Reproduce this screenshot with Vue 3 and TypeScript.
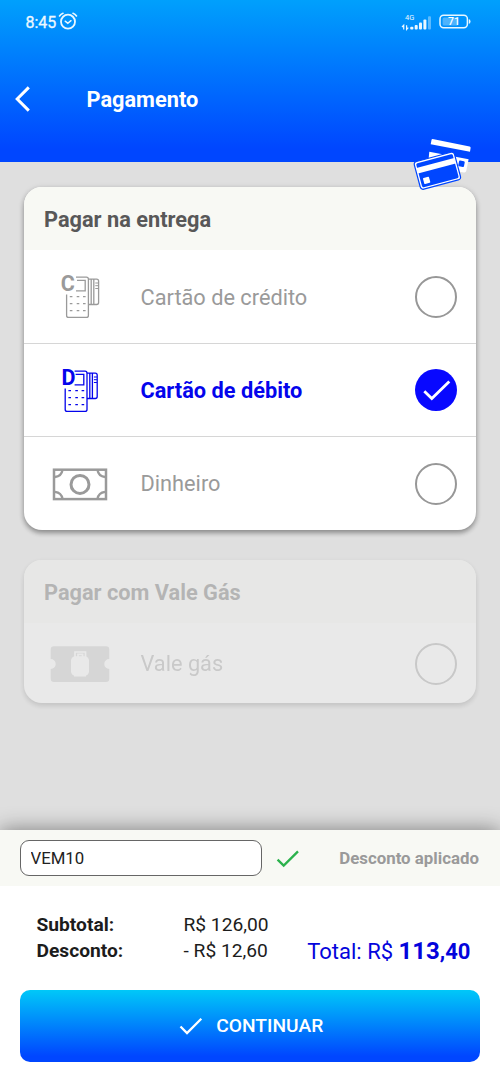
<script setup lang="ts">
import { ref } from 'vue'

interface Method {
  id: string
  label: string
  icon: 'terminal' | 'cash'
  letter?: string
}

const methods: Method[] = [
  { id: 'credit', label: 'Cartão de crédito', icon: 'terminal', letter: 'C' },
  { id: 'debit', label: 'Cartão de débito', icon: 'terminal', letter: 'D' },
  { id: 'cash', label: 'Dinheiro', icon: 'cash' },
]

const selected = ref('debit')
const coupon = ref('VEM10')
const keypad = [36.6, 43.6, 50.7]
</script>

<template>
  <div class="screen">
    <header class="top">
      <div class="status">
        <span class="clock">8:45</span>
        <svg class="alarm" width="20" height="20" viewBox="0 0 20 20" fill="none" stroke="#e9f7ff" stroke-linecap="round">
          <circle cx="10" cy="10.7" r="7" stroke-width="1.8" />
          <path d="M7.2 10.2l2.6 2.1 3.2-2.6" stroke-width="1.5" />
          <path d="M1.5 5Q2.8 3 5 2.3M15 2.3Q17.2 3 18.5 5" stroke-width="1.6" />
        </svg>
        <svg class="signal" width="34" height="20" viewBox="0 0 34 20">
          <text x="4" y="7.8" class="net">4G</text>
          <path d="M2.7 17.5v-4.2L1 15M5.6 13.2v4.2L7.3 15.6" fill="none" stroke="#e9f7ff" stroke-width="1.2" />
          <g fill="#e9f7ff">
            <rect x="9.2" y="14.8" width="3.2" height="2.7" rx="1" />
            <rect x="13.7" y="13" width="3" height="4.5" rx="1" />
            <rect x="18" y="10.6" width="3" height="6.9" rx="1" />
            <rect x="22.4" y="7.6" width="3" height="9.9" rx="1" />
            <rect x="27" y="4.3" width="3" height="13.2" rx="1" opacity=".4" />
          </g>
        </svg>
        <svg class="battery" width="33" height="16" viewBox="0 0 33 16">
          <rect x="1" y="1.3" width="27.4" height="12.4" rx="3.6" fill="none" stroke="#e9f7ff" stroke-width="1.5" />
          <rect x="3.6" y="3.6" width="15.5" height="8" rx="1.5" fill="#fff" opacity=".3" />
          <path d="M29.8 5.2q1.7 0 1.7 2.3t-1.7 2.3z" fill="#e9f7ff" />
          <text x="9" y="11.4" class="level">71</text>
        </svg>
      </div>
      <div class="title-row">
        <svg class="back" width="18" height="28" viewBox="0 0 18 28" fill="none" stroke="#fff" stroke-width="3">
          <path d="M14.8 2.4 3.2 14l11.6 11.6" />
        </svg>
        <h1>Pagamento</h1>
      </div>
      <svg class="cards" width="100" height="80" viewBox="0 0 100 80">
        <g fill="#fff">
          <path d="M32.600 9 69.600 16.600q1.200.3 1 1.400l-.6 3.800L30.700 14.300l.8-4.300q.2-1.100 1.100-1z" />
          <path d="M29.300 21.700 68.600 29.200 66.300 40.800q-.4 2-2.400 1.700L58 41.500 28.300 32z" />
        </g>
        <rect x="-2.900" y="-2.900" width="5.800" height="5.800" rx="1" fill="#0046ff" transform="translate(61.500 33.800) rotate(11)" />
        <g transform="translate(37.400 40.700) rotate(-15)">
          <rect x="-20.800" y="-14.300" width="41.600" height="28.600" rx="3" fill="#fff" stroke="#0046ff" stroke-width="1.200" />
          <rect x="-18.900" y="-12.400" width="37.800" height="24.800" rx="1.500" fill="#0046ff" />
          <rect x="-19.500" y="-8" width="39" height="5.800" fill="#fff" />
          <rect x="-16" y="3.500" width="6.200" height="6.200" rx=".8" fill="#fff" />
        </g>
      </svg>
    </header>

    <main class="content">
      <section class="card">
        <h2>Pagar na entrega</h2>
        <div
          v-for="m in methods"
          :key="m.id"
          class="row"
          :class="{ active: m.id === selected }"
          @click="selected = m.id"
        >
          <svg class="icon" width="90" height="70" viewBox="0 2 90 70" fill="none" stroke="currentColor">
            <g v-if="m.icon === 'terminal'" stroke-width="1.3" :transform="m.letter === 'D' ? 'translate(-1.4 1)' : undefined">
              <text :x="m.letter === 'D' ? 22.8 : 20.8" y="31.2" class="letter">{{ m.letter }}</text>
              <path d="M36 17.2h10.4q2 0 2 2v36.2q0 2-2 2H28.6q-2 0-2-2V34.5" />
              <path d="M37 20.4h8.2v10.4H36" />
              <path v-for="y in keypad" :key="y" :d="`M29.8 ${y}h2.6M36.7 ${y}h2.6M43 ${y}h2.6`" />
              <path d="M48.4 19.2h8.2q2 0 2 2v21.3q0 2-2 2h-8.2M51.2 19.2v25.3M53.8 19.2v25.3" />
              <path d="M55.3 23h3M55.3 25.7h3M55.3 28.5h3" stroke-width="1" />
            </g>
            <g v-else stroke-width="3" transform="translate(0 3.5)">
              <rect x="14" y="19.2" width="52" height="29.400" stroke-width="2.5" />
              <circle cx="40" cy="33.9" r="9" />
              <path
                d="M15 26.500q6.500-.8 7.500-7M65 26.500q-6.500-.8-7.500-7M15 41.300q6.500.8 7.500 7M65 41.300q-6.500.8-7.500 7"
                stroke-width="2.300"
              />
            </g>
          </svg>
          <span class="label">{{ m.label }}</span>
          <span class="radio">
            <svg v-if="m.id === selected" width="42" height="42" viewBox="0 0 42 42" fill="none" stroke="#fff" stroke-width="2.8">
              <path d="M9.300 22.300 16.800 29.600 34.300 12.400" />
            </svg>
          </span>
        </div>
      </section>

      <section class="card disabled">
        <h2>Pagar com Vale Gás</h2>
        <div class="row short">
          <svg class="icon" width="90" height="70" viewBox="0 0 90 70">
            <path
              d="M14 17.200h52q3.300 0 3.300 3.300v9.500a5 5 0 0 0 0 10v9.700q0 3.300-3.300 3.300H14q-3.300 0-3.300-3.300V40a5 5 0 0 0 0-10v-9.500q0-3.300 3.300-3.300z"
              fill="#c4c4c4"
            />
            <path d="M35 28v-5h10.500v5M38 28v-2.600h4.600V28" fill="none" stroke="#fff" stroke-width="1.700" />
            <rect x="31" y="27.300" width="18" height="19.500" rx="4.500" fill="#fff" />
            <path d="M34 46h12v1.500H34z" fill="#fff" />
          </svg>
          <span class="label">Vale gás</span>
          <span class="radio"></span>
        </div>
      </section>
    </main>

    <footer class="sheet">
      <div class="coupon">
        <input v-model="coupon" type="text" />
        <svg class="ok" width="24" height="20" viewBox="0 0 24 20" fill="none" stroke="#2bb24c" stroke-width="2.300">
          <path d="M1.600 10.600 7.700 16.600 22 2.400" />
        </svg>
        <span class="applied">Desconto aplicado</span>
      </div>
      <div class="totals">
        <dl>
          <dt>Subtotal:</dt>
          <dd>R$ 126,00</dd>
          <dt>Desconto:</dt>
          <dd>- R$ 12,60</dd>
        </dl>
        <p class="total">Total: R$ <b>113<small>,40</small></b></p>
      </div>
      <button class="continue" type="button">
        <svg width="24" height="20" viewBox="0 0 24 20" fill="none" stroke="#fff" stroke-width="2.300">
          <path d="M1.500 10.500 8 17 22.300 2.700" />
        </svg>
        <span>CONTINUAR</span>
      </button>
    </footer>
  </div>
</template>

<style>
body {
  margin: 0;
}
</style>

<style scoped>
.screen {
  display: flex;
  flex-direction: column;
  width: 500px;
  height: 1083px;
  overflow: hidden;
  background: #dfdfdf;
  font-family: Roboto, "Liberation Sans", sans-serif;
}
h1, h2, p, dl, dd, dt {
  margin: 0;
}
.top {
  position: relative;
  box-sizing: border-box;
  height: 162px;
  flex: none;
  background: linear-gradient(#00a0fc, #0046ff 92%);
}
.status {
  display: flex;
  align-items: flex-start;
  height: 74px;
  box-sizing: border-box;
  padding: 12px 28px 0 25.500px;
}
.clock {
  margin-top: 1px;
  width: 32.500px;
  font-size: 16px;
  line-height: 19px;
  color: #edf8ff;
  -webkit-text-stroke: 0.300px #edf8ff;
}
.alarm {
  margin-top: -1px;
}
.signal {
  margin-left: auto;
}
.battery {
  margin: 2px 0 0 4px;
}
.net {
  font-size: 7.500px;
  fill: #e9f7ff;
}
.level {
  font-size: 10.500px;
  font-weight: 500;
  fill: #fff;
}
.title-row {
  display: flex;
  align-items: center;
  height: 50px;
  padding-left: 14px;
}
h1 {
  margin: 1px 0 0 54.500px;
  font-size: 21.750px;
  font-weight: 700;
  line-height: 28px;
  color: #fff;
}
.cards {
  position: absolute;
  left: 400px;
  top: 130px;
  z-index: 2;
}
.content {
  display: flex;
  flex-direction: column;
  gap: 30px;
  padding: 25px 24px 0;
  flex: 1;
}
.card {
  overflow: hidden;
  border-radius: 18px;
  background: #fff;
  box-shadow: 0 3px 5px rgba(0, 0, 0, 0.320), 0 1px 6px rgba(0, 0, 0, 0.120);
}
.card h2 {
  height: 63px;
  padding-left: 20px;
  background: #f8f9f4;
  color: #585858;
  font-size: 21.750px;
  font-weight: 700;
  line-height: 65px;
}
.disabled {
  opacity: 0.320;
}
.disabled h2 {
  color: #5a5a5a;
}
.row {
  display: flex;
  align-items: center;
  box-sizing: border-box;
  height: 93px;
  padding: 0 19.500px 0 16px;
  color: #9a9a9a;
}
.row:nth-child(2) {
  padding-top: 1px;
}
.row:nth-child(4) {
  height: 94px;
}
.row + .row {
  border-top: 1px solid #d6d6d6;
}
.short {
  height: 80px;
}
.icon {
  flex: none;
}
.letter {
  font-size: 21.500px;
  font-weight: 700;
  fill: currentColor;
  stroke: none;
}
.label {
  flex: 1;
  margin-left: 10.500px;
  font-size: 21.750px;
}
.active {
  color: #0404ec;
}
.active .label {
  font-weight: 700;
}
.radio {
  box-sizing: border-box;
  width: 42px;
  height: 42px;
  flex: none;
  border: 2.500px solid #979797;
  border-radius: 50%;
}
.active .radio {
  border: 0;
  background: #0808ff;
}
.radio svg {
  display: block;
}
.sheet {
  flex: none;
  height: 253px;
  background: #fff;
  box-shadow: 0 0 20px rgba(0, 0, 0, 0.450);
}
.coupon {
  display: flex;
  align-items: center;
  height: 56px;
  padding: 0 21px 0 20px;
  background: #f8f9f4;
}
.coupon input {
  box-sizing: border-box;
  width: 242px;
  height: 36px;
  padding: 0 9.500px;
  border: 1.500px solid #666;
  border-radius: 9px;
  background: #fff;
  color: #222;
  font: 16.800px Roboto, sans-serif;
  outline: none;
}
.ok {
  margin: 1px 0 0 13.500px;
}
.applied {
  margin-left: auto;
  color: #9a9a9a;
  font-size: 16.850px;
  font-weight: 700;
}
.totals {
  display: flex;
  justify-content: space-between;
  height: 104px;
  box-sizing: border-box;
  padding: 26px 29.500px 0 36.500px;
}
dl {
  display: grid;
  grid-template-columns: 147px auto;
  grid-auto-rows: 26px;
  height: 52px;
  color: #1c1c1c;
  font-size: 19.200px;
  line-height: 26px;
}
dt {
  font-weight: 700;
}
.total {
  margin-top: 25px;
  color: #0404dc;
  font-size: 22px;
  line-height: 28px;
}
.total b {
  font-size: 24px;
}
.total small {
  font-size: 22px;
}
.continue {
  display: flex;
  align-items: center;
  justify-content: center;
  gap: 13px;
  width: 460px;
  height: 72px;
  margin: 0 20px;
  padding: 0 0 1px 2.500px;
  border: 0;
  border-radius: 10px;
  background: linear-gradient(#00c8f8, #0046ff 92%);
  color: #fff;
  font: 500 19.200px Roboto, sans-serif;
}
</style>
